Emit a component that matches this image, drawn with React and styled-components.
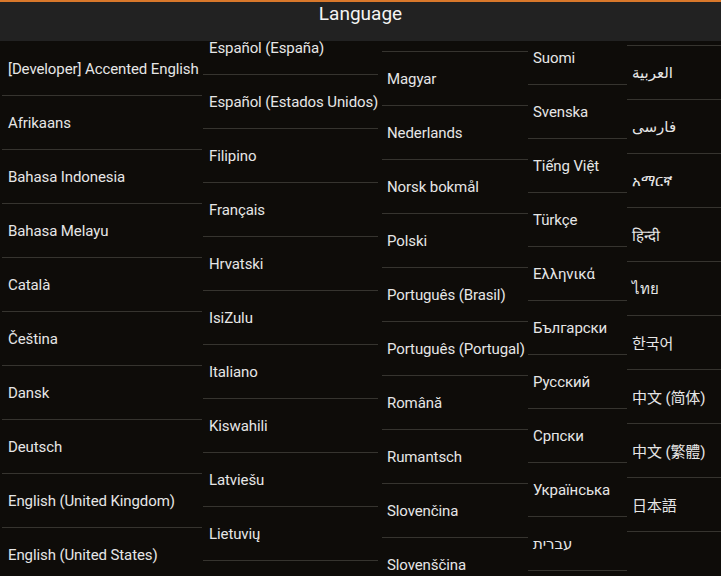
import React from "react"
import styled, { createGlobalStyle } from "styled-components"

const GlobalStyle = createGlobalStyle`
  html, body, #root {
    margin: 0;
    padding: 0;
    height: 100%;
  }
  body {
    background: #0e0c09;
    font-family: Roboto, "DejaVu Sans", "Noto Sans CJK SC", sans-serif;
    overflow: hidden;
  }
`

const Screen = styled.div`
  display: flex;
  flex-direction: column;
  height: 100vh;
  background: #0e0c09;
`

const Header = styled.div`
  flex: 0 0 auto;
  height: 39px;
  border-top: 2px solid #d9782b;
  background: #222222;
  display: flex;
  justify-content: center;
  align-items: flex-start;
`

const Title = styled.h1`
  margin: 0;
  color: #f4f4f4;
  font-size: 19px;
  font-weight: 400;
  line-height: 24px;
`

const Body = styled.div`
  flex: 1 1 auto;
  display: flex;
  overflow: hidden;
  padding-left: 2px;
`

const Column = styled.div`
  flex: 0 0 auto;
  width: ${props => props.$w}px;
  margin-left: ${props => props.$ml || 0}px;
  margin-top: ${props => props.$shift}px;
  display: flex;
  flex-direction: column;
`

const Row = styled.div`
  flex: 0 0 auto;
  height: 54px;
  box-sizing: border-box;
  border-bottom: 1px solid #36342f;
  display: flex;
  align-items: center;
  padding-left: ${props => props.$pad || 6}px;
  color: #e6e6e6;
  font-size: 15px;
  letter-spacing: -0.1px;
  white-space: nowrap;
`

const columns = [
  {
    w: 200,
    shift: 1,
    pad: 6,
    items: [
      "[Developer] Accented English",
      "Afrikaans",
      "Bahasa Indonesia",
      "Bahasa Melayu",
      "Català",
      "Čeština",
      "Dansk",
      "Deutsch",
      "English (United Kingdom)",
      "English (United States)",
    ],
  },
  {
    w: 175,
    ml: 1,
    shift: -20,
    pad: 6,
    items: [
      "Español (España)",
      "Español (Estados Unidos)",
      "Filipino",
      "Français",
      "Hrvatski",
      "IsiZulu",
      "Italiano",
      "Kiswahili",
      "Latviešu",
      "Lietuvių",
    ],
  },
  {
    w: 146,
    ml: 4,
    shift: -43,
    pad: 5,
    items: [
      "",
      "Magyar",
      "Nederlands",
      "Norsk bokmål",
      "Polski",
      "Português (Brasil)",
      "Português (Portugal)",
      "Română",
      "Rumantsch",
      "Slovenčina",
      "Slovenščina",
    ],
  },
  {
    w: 99,
    shift: -10,
    pad: 5,
    items: [
      "Suomi",
      "Svenska",
      "Tiếng Việt",
      "Türkçe",
      "Ελληνικά",
      "Български",
      "Русский",
      "Српски",
      "Українська",
      "עברית",
    ],
  },
  {
    w: 94,
    shift: -49,
    pad: 5,
    items: [
      "",
      "العربية",
      "فارسی",
      "አማርኛ",
      "हिन्दी",
      "ไทย",
      "한국어",
      "中文 (简体)",
      "中文 (繁體)",
      "日本語",
    ],
  },
]

function App() {
  return (
    <Screen>
      <GlobalStyle />
      <Header>
        <Title>Language</Title>
      </Header>
      <Body>
        {columns.map((col, i) => (
          <Column key={i} $w={col.w} $ml={col.ml} $shift={col.shift}>
            {col.items.map((name, j) => (
              <Row key={j} $pad={col.pad}>
                {name}
              </Row>
            ))}
          </Column>
        ))}
      </Body>
    </Screen>
  )
}
export default App
